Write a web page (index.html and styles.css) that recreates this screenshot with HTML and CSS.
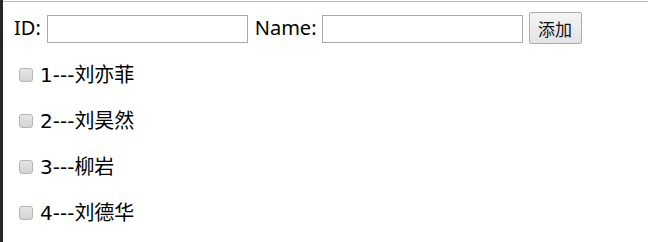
FILE: index.html
```html
<!DOCTYPE html>
<html lang="zh">

<head>
    <meta charset="UTF-8">
    <meta name="viewport" content="width=device-width, initial-scale=1.0">
    <title>Document</title>
    <link rel="stylesheet" href="styles.css">
</head>

<body>
    <div class="screen">
        <div class="gutter"></div>
        <div class="page">
            <div class="rule"></div>
            <div class="app">
                <div class="form">
                    <label class="lbl">ID:</label>
                    <input class="txt" type="text">
                    <label class="lbl name">Name:</label>
                    <input class="txt" type="text">
                    <button class="add">添加</button>
                </div>
                <div class="list">
                    <div class="item"><input class="chk" type="checkbox"><span>1---刘亦菲</span></div>
                    <div class="item"><input class="chk" type="checkbox"><span>2---刘昊然</span></div>
                    <div class="item"><input class="chk" type="checkbox"><span>3---柳岩</span></div>
                    <div class="item"><input class="chk" type="checkbox"><span>4---刘德华</span></div>
                </div>
            </div>
        </div>
    </div>
</body>

</html>
```

FILE: styles.css
```css
* {
    margin: 0;
    padding: 0;
    box-sizing: border-box;
}

body {
    font-family: "Noto Sans", "Noto Sans CJK SC", sans-serif;
    font-size: 20px;
    color: #000;
    background-color: #fff;
}

.screen {
    display: flex;
    height: 242px;
}

.gutter {
    width: 3px;
    background-color: #262626;
}

.page {
    flex: 1;
    padding-top: 1px;
}

.rule {
    height: 1px;
    background-color: #b8b8b8;
}

.app {
    padding: 10px 11px;
}

.form {
    display: flex;
    align-items: center;
    height: 32px;
}

.lbl {
    line-height: 26px;
    margin-right: 6px;
}

.name {
    margin-left: 7px;
    margin-right: 5px;
}

.txt {
    width: 201px;
    height: 28px;
    border: 1px solid #a9a9a9;
    margin-top: 2px;
}

.add {
    width: 53px;
    height: 32px;
    margin-left: 6px;
    border: 1px solid #adadad;
    border-radius: 2px;
    background: linear-gradient(#f4f4f4, #e3e3e3);
    font-family: "Noto Sans CJK SC", sans-serif;
    font-size: 17px;
    color: #111;
}

.list {
    display: flex;
    flex-direction: column;
    gap: 20px;
    margin-top: 18px;
}

.item {
    display: flex;
    align-items: center;
    height: 26px;
    line-height: 26px;
    font-family: "DejaVu Sans", "Noto Sans CJK SC", sans-serif;
}

.chk {
    appearance: none;
    width: 14px;
    height: 14px;
    margin-left: 5px;
    margin-right: 7px;
    border: 1px solid #b4b4b4;
    border-radius: 3px;
    background: linear-gradient(#e6e6e6, #d4d4d4);
}
```
